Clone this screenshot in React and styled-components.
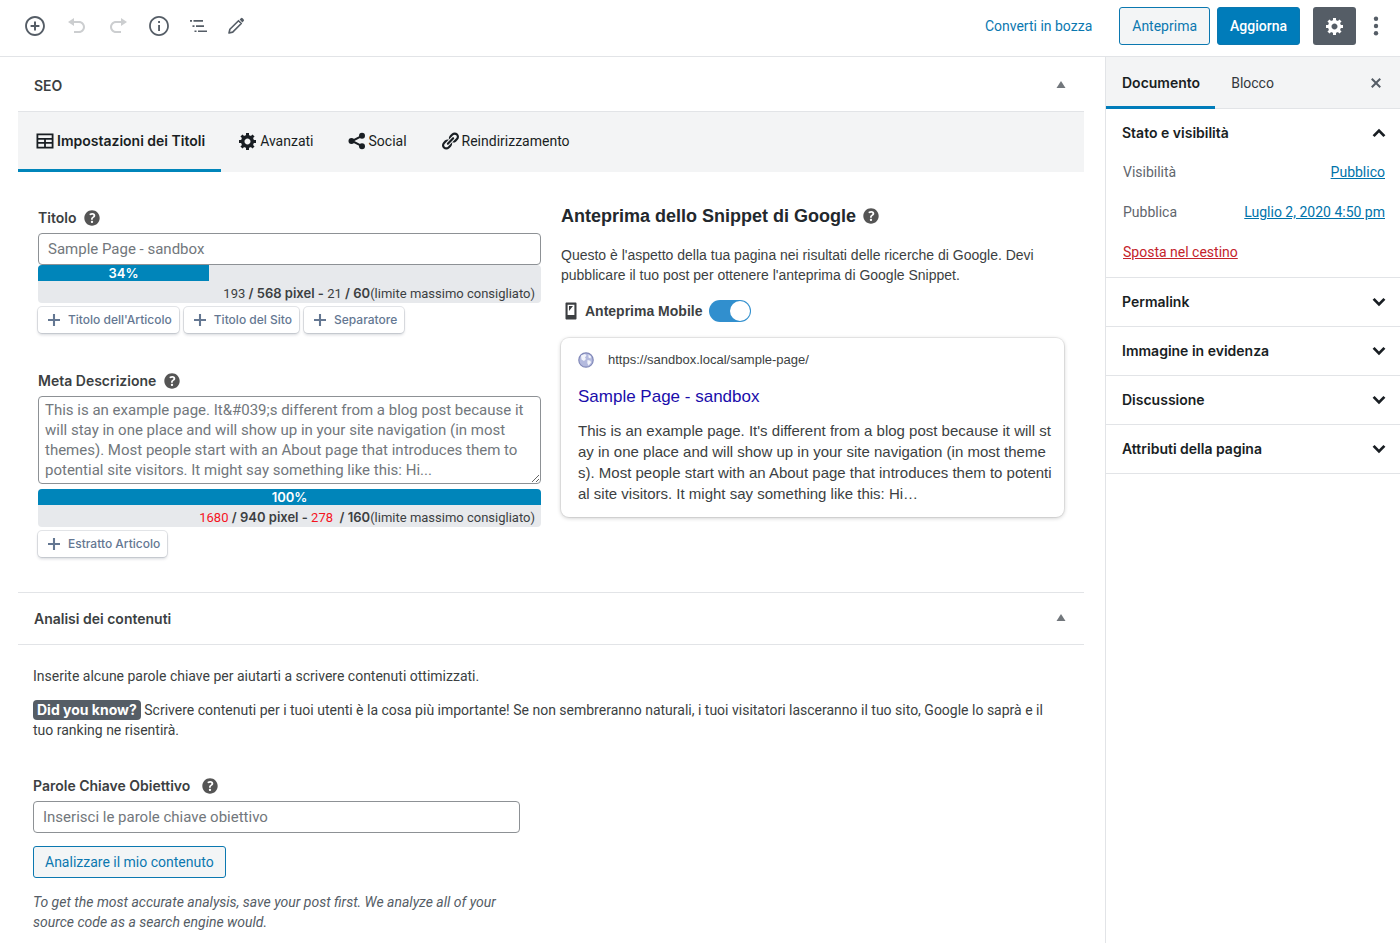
import React from "react";
import styled, { createGlobalStyle } from "styled-components";

const ui = `Roboto, "Liberation Sans", sans-serif`;
const strong = `Inter, "Liberation Sans", sans-serif`;
const arial = `"Liberation Sans", Arial, sans-serif`;

const GlobalStyle = createGlobalStyle`
  *, *::before, *::after { box-sizing: border-box; }
  body {
    margin: 0;
    background: #fff;
    color: #3c3f42;
    font-family: ${ui};
    font-size: 14px;
    line-height: 20px;
  }
  button, input, textarea { font: inherit; color: inherit; }
  button { background: none; border: 0; padding: 0; margin: 0; cursor: pointer; }
  h1, h2, h3, p { margin: 0; }
`;

/* ---------- icons ---------- */

const PATHS = {
  insert:
    "M10 1c-5 0-9 4-9 9s4 9 9 9 9-4 9-9-4-9-9-9zm0 16.300c-4 0-7.300-3.300-7.300-7.300S6 2.700 10 2.700s7.300 3.300 7.300 7.300-3.300 7.300-7.300 7.300zm.9-11.300H9.100v3.100H6v1.800h3.100V14h1.800v-3.100H14V9.100h-3.100V6z",
  undo: "M12 5H7V2L1 6l6 4V7h5c2.2 0 4 1.8 4 4s-1.8 4-4 4H7v2h5c3.3 0 6-2.7 6-6s-2.7-6-6-6z",
  redo: "M8 5h5V2l6 4-6 4V7H8c-2.2 0-4 1.8-4 4s1.8 4 4 4h5v2H8c-3.3 0-6-2.7-6-6s2.7-6 6-6z",
  info: "M10 1c-5 0-9 4-9 9s4 9 9 9 9-4 9-9-4-9-9-9zm0 16.400c-4.100 0-7.400-3.300-7.400-7.400S5.900 2.600 10 2.600s7.400 3.300 7.400 7.400-3.300 7.400-7.400 7.400zM9.200 9h1.700v5.500H9.200zM9.200 5.500h1.700v1.800H9.200z",
  gear: "M18 12h-2.180c-.17.7-.44 1.350-.81 1.930l1.540 1.540-2.100 2.100-1.540-1.540c-.58.36-1.230.63-1.910.79V19H8v-2.180c-.68-.16-1.330-.43-1.910-.79l-1.540 1.540-2.120-2.120 1.540-1.540c-.36-.58-.63-1.230-.79-1.910H1V9.030h2.170c.16-.7.44-1.350.8-1.940L2.430 5.550l2.100-2.100 1.540 1.540c.58-.37 1.240-.64 1.930-.81V2h3v2.180c.68.16 1.330.43 1.910.79l1.540-1.540 2.120 2.120-1.540 1.540c.36.59.64 1.240.8 1.940H18V12zm-8.500 1.500c1.660 0 3-1.340 3-3s-1.340-3-3-3-3 1.340-3 3 1.340 3 3 3z",
  table:
    "M18.500 17.500V2.500H1.500v15h17zM16.700 7H3.300V4.300h13.400V7zm-7.600 4H3.300V8.700h5.800V11zm7.600 0h-5.800V8.700h5.800V11zm-7.600 4.700H3.300v-2.900h5.800v2.900zm7.600 0h-5.800v-2.900h5.800v2.900z",
  help: "M17 10c0-3.870-3.140-7-7-7-3.870 0-7 3.130-7 7s3.130 7 7 7c3.860 0 7-3.130 7-7zm-6.300 1.480H9.140v-.43c0-.38.08-.7.24-.98s.46-.57.88-.89c.41-.29.68-.53.81-.71.14-.18.2-.39.2-.62 0-.25-.09-.44-.28-.58-.19-.13-.45-.19-.79-.19-.58 0-1.250.15-2 .46l-.64-1.280c.87-.49 1.800-.74 2.770-.74.81 0 1.450.2 1.920.58.48.39.71.91.71 1.550 0 .43-.09.8-.29 1.110-.19.32-.57.67-1.110 1.060-.38.28-.61.49-.71.63-.1.15-.15.34-.15.57v.46zm-1.470 2.740c-.18-.17-.27-.42-.27-.73 0-.33.08-.58.26-.75s.43-.25.77-.25c.32 0 .57.09.75.26s.27.42.27.74c0 .3-.09.55-.27.72-.18.18-.43.27-.75.27-.33 0-.58-.09-.76-.26z",
  link: "M17.740 2.760c1.680 1.690 1.680 4.410 0 6.100l-1.530 1.520c-1.120 1.120-2.700 1.470-4.140 1.090l2.620-2.610.76-.77.76-.76c.84-.84.84-2.200 0-3.040-.84-.85-2.200-.85-3.040 0l-.77.76-3.380 3.380c-.37-1.440-.02-3.020 1.100-4.140l1.520-1.530c1.690-1.680 4.420-1.680 6.100 0zM8.590 13.430l5.340-5.340c.42-.42.42-1.100 0-1.520-.44-.43-1.130-.39-1.530 0l-5.330 5.340c-.42.42-.42 1.100 0 1.520.44.43 1.130.39 1.520 0zm-.76 2.290l4.140-4.150c.38 1.440.03 3.020-1.090 4.140l-1.520 1.530c-1.690 1.680-4.410 1.680-6.100 0-1.680-1.680-1.680-4.420 0-6.100l1.530-1.520c1.120-1.120 2.700-1.470 4.140-1.100l-4.140 4.150c-.85.84-.85 2.200 0 3.050.84.84 2.200.84 3.040 0z",
  phone:
    "M5.500 1.500h9c.55 0 1 .45 1 1v15c0 .55-.45 1-1 1h-9c-.55 0-1-.45-1-1v-15c0-.55.45-1 1-1zm7.900 12.500V3.700H6.600V14h6.800zM8 5h4l-4 5V5z",
  close:
    "M14.950 6.460L11.410 10l3.540 3.540-1.410 1.410L10 11.420l-3.530 3.530-1.420-1.420L8.580 10 5.050 6.470l1.420-1.420L10 8.580l3.540-3.530z",
  plus: "M17.500 8.700v2.600h-6.200v6.200H8.700v-6.200H2.500V8.700h6.200V2.500h2.600v6.200z",
  chevronDown: "M4.500 5l5.500 5.500L15.500 5 18 7.200l-8 8-8-8z",
  chevronUp: "M15.500 15L10 9.500 4.500 15 2 12.800l8-8 8 8z",
  outline: "M2 4h2v1.700H2zM5.500 4H15v1.700H5.500zM4.500 9.200h2v1.700h-2zM8 9.200h8v1.700H8zM6.500 14.400h2v1.700h-2zM10 14.400h9v1.700h-9z",
  caret: "M10 0l9 14H1z",
};

const Svg = styled.svg`
  display: block;
  flex: none;
  fill: currentColor;
`;

function Icon({ name, size = 20 }) {
  return (
    <Svg width={size} height={size} viewBox="0 0 20 20" aria-hidden="true">
      <path d={PATHS[name]} fillRule="evenodd" />
    </Svg>
  );
}

function PencilIcon() {
  return (
    <Svg width="20" height="20" viewBox="0 0 20 20" aria-hidden="true">
      <path
        d="M3 17l.9-3.700L12.500 4.700l2.800 2.800L6.700 16.100z"
        fill="none"
        stroke="currentColor"
        strokeWidth="1.600"
        strokeLinejoin="round"
      />
      <path d="M13.600 3.600l1.300-1.300a1.200 1.200 0 0 1 1.700 0l1.100 1.100a1.200 1.200 0 0 1 0 1.700l-1.300 1.300z" />
    </Svg>
  );
}

function ShareIcon() {
  return (
    <Svg width="20" height="20" viewBox="0 0 20 20" aria-hidden="true">
      <path d="M15 4.800L5 10l10 5.200" fill="none" stroke="currentColor" strokeWidth="2" />
      <circle cx="15" cy="4.800" r="3" />
      <circle cx="4.500" cy="10" r="3" />
      <circle cx="15" cy="15.200" r="3" />
    </Svg>
  );
}

function DotsIcon() {
  return (
    <Svg width="20" height="20" viewBox="0 0 20 20" aria-hidden="true">
      <circle cx="10" cy="2.800" r="2.200" />
      <circle cx="10" cy="10" r="2.200" />
      <circle cx="10" cy="17.200" r="2.200" />
    </Svg>
  );
}

function GlobeIcon() {
  return (
    <Svg width="16" height="16" viewBox="0 0 16 16" aria-hidden="true">
      <circle cx="8" cy="8" r="7.200" fill="#b4bade" stroke="#8088b8" strokeWidth="1.200" />
      <path d="M3 3.500l4-1.500 1.500 1.500L7 5.500l1 1.500-2 2-2.500-1.500zM9.500 8l3 .8.5 2-2.500 2.700-1.200-2.500zM10.500 2.500l2.500 2-.5 2-2-1z" fill="#f2f4fb" />
    </Svg>
  );
}

/* ---------- page frame ---------- */

const Page = styled.div`
  display: flex;
  flex-direction: column;
  min-height: 100vh;
`;

const Header = styled.header`
  display: flex;
  align-items: center;
  justify-content: space-between;
  height: 57px;
  padding: 0 14px 4px 24px;
  border-bottom: 1px solid #e2e4e7;
`;

const Tools = styled.div`
  display: flex;
  align-items: center;
  gap: 20px;
`;

const ToolGroup = styled.div`
  display: flex;
  align-items: center;
  gap: ${(p) => p.$gap}px;
`;

const ToolButton = styled.button`
  color: #555d66;
  &:disabled { color: #ccced0; }
`;

const HeaderActions = styled.div`
  display: flex;
  align-items: center;
`;

const TextButton = styled.button`
  color: #0b78b0;
  margin-right: 27px;
`;

const BoxButton = styled.button`
  height: ${(p) => (p.$small ? 32 : 38)}px;
  padding: 0 ${(p) => (p.$small ? 11 : 12)}px;
  border: 1px solid #0b78b0;
  border-radius: 3px;
  background: ${(p) => (p.$primary ? "#007cba" : "#f3f5f6")};
  color: ${(p) => (p.$primary ? "#fff" : "#0b78b0")};
  font-weight: ${(p) => (p.$primary ? 500 : 400)};
  margin-right: ${(p) => (p.$primary ? 13 : 7)}px;
`;

const GearButton = styled.button`
  display: grid;
  place-items: center;
  width: 43px;
  height: 38px;
  border-radius: 3px;
  background: #555d66;
  color: #fff;
  margin-right: 10px;
`;

const Body = styled.div`
  display: flex;
  flex: 1;
`;

const Main = styled.main`
  flex: 1;
  min-width: 0;
  padding: 0 21px 0 18px;
`;

/* ---------- meta boxes ---------- */

const BoxHeader = styled.div`
  display: flex;
  align-items: center;
  justify-content: space-between;
  height: ${(p) => (p.$first ? 55 : 52)}px;
  padding: ${(p) => (p.$first ? 4 : 0)}px 18px 0 16px;
  border-bottom: 1px solid #e2e4e7;
  button { color: #72777c; }
`;

const BoxTitle = styled.h2`
  font-family: ${strong};
  font-size: 14px;
  line-height: 20px;
  font-weight: 600;
`;

const Tabs = styled.div`
  display: flex;
  height: 60px;
  background: #f3f4f5;
`;

const Tab = styled.button`
  display: flex;
  align-items: center;
  gap: 2px;
  padding: 3px 16px 3px 17px;
  color: #191e23;
  font-family: ${(p) => (p.$active ? strong : ui)};
  font-weight: ${(p) => (p.$active ? 600 : 400)};
  border-bottom: 3px solid ${(p) => (p.$active ? "#0085ba" : "transparent")};
`;

const SeoBody = styled.div`
  display: grid;
  grid-template-columns: minmax(0, 1fr) minmax(0, 1fr);
  gap: 20px;
  padding: 32px 20px 35px;
  border-bottom: 1px solid #e2e4e7;
`;

const Column = styled.div`
  display: flex;
  flex-direction: column;
  min-width: 0;
`;

const Field = styled.div`
  & + & { margin-top: 34px; }
`;

const FieldLabel = styled.div`
  display: flex;
  align-items: center;
  gap: ${(p) => (p.$wide ? 9 : 5)}px;
  height: 29px;
  padding-bottom: 1px;
  font-family: ${strong};
  font-weight: 600;
  button { color: #555; }
`;

const TextInput = styled.input`
  display: block;
  width: 100%;
  height: 32px;
  padding: 0 9px;
  border: 1px solid #8d9195;
  border-radius: 4px;
  background: #fff;
  font-size: 15px;
  &::placeholder { color: #72777c; opacity: 1; }
`;

const TextArea = styled.textarea`
  display: block;
  width: 100%;
  height: 88px;
  padding: 3px 6px;
  border: 1px solid #8d9195;
  border-radius: 4px;
  background: #fff;
  font-size: 15px;
  line-height: 20px;
  overflow: hidden;
  margin-bottom: 5px;
  &::placeholder { color: #72777c; opacity: 1; }
`;

const Meter = styled.div`
  background: #e7e9ec;
  border-radius: 4px;
  overflow: hidden;
  font-size: 13px;
`;

const MeterFill = styled.div`
  height: 16px;
  line-height: 16px;
  background: #0085ba;
  color: #fff;
  font-family: ${strong};
  font-weight: 600;
  text-align: center;
`;

const MeterText = styled.div`
  padding: 2px 6px 0;
  height: 22px;
  text-align: right;
  white-space: pre;
  b { font-family: ${strong}; font-weight: 600; }
`;

const Over = styled.span`
  color: #f5141e;
`;

const Chips = styled.div`
  display: flex;
  gap: 5px;
  margin-top: 4px;
`;

const Chip = styled.button`
  display: flex;
  align-items: center;
  gap: 6px;
  height: 26px;
  padding: 0 7px 0 8px;
  border-radius: 4px;
  background: #fff;
  box-shadow: 0 0 0 1px rgba(60, 70, 90, 0.14), 0 2px 3px rgba(60, 70, 90, 0.2);
  color: #647792;
  font-family: ${strong};
  font-size: 12px;
  font-weight: 500;
`;

/* ---------- snippet ---------- */

const SnippetTitle = styled.h3`
  display: flex;
  align-items: center;
  gap: 4px;
  height: 24px;
  font-family: ${arial};
  font-size: 18px;
  font-weight: 700;
  color: #23282d;
  button { color: #555; }
`;

const SnippetText = styled.p`
  margin-top: 17px;
  font-family: ${arial};
`;

const MobileRow = styled.label`
  display: flex;
  align-items: center;
  height: 22px;
  margin-top: 15px;
  font-family: ${arial};
  font-weight: 700;
  gap: 4px;
`;

const Switch = styled.input`
  appearance: none;
  width: 42px;
  height: 22px;
  margin: 0 0 0 3px;
  border-radius: 11px;
  background: #318fce;
  display: flex;
  justify-content: flex-end;
  padding: 1px;
  &::after {
    content: "";
    width: 20px;
    height: 20px;
    border-radius: 50%;
    background: #fff;
  }
`;

const SnippetCard = styled.div`
  margin-top: 16px;
  padding: 12px 0 13px 17px;
  border-radius: 8px;
  box-shadow: 0 0 0 1px rgba(0, 0, 0, 0.06), 0 1px 4px rgba(0, 0, 0, 0.22);
  font-family: ${arial};
`;

const SnippetUrl = styled.div`
  display: flex;
  align-items: center;
  gap: 14px;
  font-size: 13px;
`;

const SnippetHeading = styled.div`
  margin-top: 17px;
  font-size: 17px;
  color: #1a0dab;
`;

const SnippetDescription = styled.p`
  margin-top: 13px;
  font-size: 15px;
  line-height: 21px;
  word-break: break-all;
`;

/* ---------- analysis ---------- */

const Analysis = styled.div`
  padding: 21px 15px 10px;
`;

const Tip = styled.p`
  margin-top: 14px;
  padding-right: 8px;
`;

const Badge = styled.span`
  display: inline-block;
  padding: 0 4px;
  border-radius: 4px;
  background: #555d66;
  color: #fff;
  font-family: ${strong};
  font-weight: 700;
`;

const Keywords = styled.div`
  width: 47%;
  margin-top: 32px;
`;

const AnalyzeButton = styled(BoxButton)`
  margin-top: 13px;
`;

const Note = styled.p`
  margin-top: 14px;
  font-style: italic;
  color: #555d66;
`;

/* ---------- sidebar ---------- */

const Sidebar = styled.aside`
  width: 295px;
  flex: none;
  border-left: 1px solid #e2e4e7;
`;

const SideTabs = styled.div`
  display: flex;
  align-items: stretch;
  height: 52px;
  background: #f3f4f5;
  border-bottom: 1px solid #e2e4e7;
  padding-right: 14px;
`;

const SideTab = styled.button`
  padding: 3px 15px 0 16px;
  margin-bottom: -1px;
  color: ${(p) => (p.$active ? "#191e23" : "#33383d")};
  font-family: ${(p) => (p.$active ? strong : ui)};
  font-weight: ${(p) => (p.$active ? 600 : 400)};
  border-bottom: 3px solid ${(p) => (p.$active ? "#007cba" : "transparent")};
`;

const CloseButton = styled.button`
  margin-left: auto;
  color: #555d66;
`;

const Section = styled.section`
  border-bottom: 1px solid #e2e4e7;
`;

const SectionToggle = styled.button`
  display: flex;
  align-items: center;
  justify-content: space-between;
  width: 100%;
  height: 48px;
  padding: 0 13px 0 16px;
  font-family: ${strong};
  font-weight: 600;
  color: #191e23;
`;

const StatusRows = styled.div`
  display: flex;
  flex-direction: column;
  gap: 20px;
  padding: 5px 15px 15px 17px;
  color: #5f666d;
`;

const StatusRow = styled.div`
  display: flex;
  justify-content: space-between;
`;

const LinkButton = styled.button`
  color: ${(p) => (p.$danger ? "#c4232b" : "#0073aa")};
  text-decoration: underline;
`;

function Help() {
  return (
    <button type="button" aria-label="Aiuto">
      <Icon name="help" size={22} />
    </button>
  );
}

const CLOSED = ["Permalink", "Immagine in evidenza", "Discussione", "Attributi della pagina"];

export default function App() {
  return (
    <Page>
      <GlobalStyle />
      <Header>
        <Tools>
          <ToolGroup $gap={21}>
            <ToolButton aria-label="Aggiungi blocco"><Icon name="insert" size={22} /></ToolButton>
            <ToolButton aria-label="Annulla" disabled><Icon name="undo" /></ToolButton>
            <ToolButton aria-label="Ripeti" disabled><Icon name="redo" /></ToolButton>
          </ToolGroup>
          <ToolGroup $gap={18}>
            <ToolButton aria-label="Informazioni"><Icon name="info" size={22} /></ToolButton>
            <ToolButton aria-label="Navigazione blocchi"><Icon name="outline" /></ToolButton>
            <ToolButton aria-label="Strumenti"><PencilIcon /></ToolButton>
          </ToolGroup>
        </Tools>
        <HeaderActions>
          <TextButton>Converti in bozza</TextButton>
          <BoxButton>Anteprima</BoxButton>
          <BoxButton $primary>Aggiorna</BoxButton>
          <GearButton aria-label="Impostazioni"><Icon name="gear" /></GearButton>
          <ToolButton aria-label="Altro"><DotsIcon /></ToolButton>
        </HeaderActions>
      </Header>

      <Body>
        <Main>
          <BoxHeader $first>
            <BoxTitle>SEO</BoxTitle>
            <button aria-label="Chiudi SEO"><Icon name="caret" size={10} /></button>
          </BoxHeader>
          <Tabs>
            <Tab $active><Icon name="table" />Impostazioni dei Titoli</Tab>
            <Tab><Icon name="gear" />Avanzati</Tab>
            <Tab><ShareIcon />Social</Tab>
            <Tab><Icon name="link" />Reindirizzamento</Tab>
          </Tabs>

          <SeoBody>
            <Column>
              <Field>
                <FieldLabel><label htmlFor="titolo">Titolo</label><Help /></FieldLabel>
                <TextInput id="titolo" placeholder="Sample Page - sandbox" />
                <Meter>
                  <MeterFill style={{ width: "34%" }}>34%</MeterFill>
                  <MeterText>
                    193<b> / 568 pixel - </b>21<b> / 60</b>(limite massimo consigliato)
                  </MeterText>
                </Meter>
                <Chips>
                  <Chip><Icon name="plus" size={16} />Titolo dell'Articolo</Chip>
                  <Chip><Icon name="plus" size={16} />Titolo del Sito</Chip>
                  <Chip><Icon name="plus" size={16} />Separatore</Chip>
                </Chips>
              </Field>
              <Field>
                <FieldLabel><label htmlFor="meta">Meta Descrizione</label><Help /></FieldLabel>
                <TextArea
                  id="meta"
                  placeholder={
                    "This is an example page. It&#039;s different from a blog post because it will stay in one place and will show up in your site navigation (in most themes). Most people start with an About page that introduces them to potential site visitors. It might say something like this: Hi..."
                  }
                />
                <Meter>
                  <MeterFill style={{ width: "100%" }}>100%</MeterFill>
                  <MeterText>
                    <Over>1680</Over><b> / 940 pixel - </b><Over>278</Over><b>  / 160</b>(limite massimo consigliato)
                  </MeterText>
                </Meter>
                <Chips>
                  <Chip><Icon name="plus" size={16} />Estratto Articolo</Chip>
                </Chips>
              </Field>
            </Column>

            <Column>
              <SnippetTitle>Anteprima dello Snippet di Google<Help /></SnippetTitle>
              <SnippetText>
                Questo è l'aspetto della tua pagina nei risultati delle ricerche di Google. Devi
                pubblicare il tuo post per ottenere l'anteprima di Google Snippet.
              </SnippetText>
              <MobileRow>
                <Icon name="phone" />
                Anteprima Mobile
                <Switch type="checkbox" defaultChecked />
              </MobileRow>
              <SnippetCard>
                <SnippetUrl><GlobeIcon />https://sandbox.local/sample-page/</SnippetUrl>
                <SnippetHeading>Sample Page - sandbox</SnippetHeading>
                <SnippetDescription>
                  This is an example page. It's different from a blog post because it will st
                  <br />
                  ay in one place and will show up in your site navigation (in most theme
                  <br />
                  s). Most people start with an About page that introduces them to potenti
                  <br />
                  al site visitors. It might say something like this: Hi…
                </SnippetDescription>
              </SnippetCard>
            </Column>
          </SeoBody>

          <BoxHeader>
            <BoxTitle>Analisi dei contenuti</BoxTitle>
            <button aria-label="Chiudi analisi"><Icon name="caret" size={10} /></button>
          </BoxHeader>
          <Analysis>
            <p>Inserite alcune parole chiave per aiutarti a scrivere contenuti ottimizzati.</p>
            <Tip>
              <Badge>Did you know?</Badge> Scrivere contenuti per i tuoi utenti è la cosa più
              importante! Se non sembreranno naturali, i tuoi visitatori lasceranno il tuo sito,
              Google lo saprà e il tuo ranking ne risentirà.
            </Tip>
            <Keywords>
              <FieldLabel $wide><label htmlFor="parole">Parole Chiave Obiettivo</label><Help /></FieldLabel>
              <TextInput id="parole" placeholder="Inserisci le parole chiave obiettivo" />
              <AnalyzeButton $small>Analizzare il mio contenuto</AnalyzeButton>
              <Note>
                To get the most accurate analysis, save your post first. We analyze all of your
                source code as a search engine would.
              </Note>
            </Keywords>
          </Analysis>
        </Main>

        <Sidebar>
          <SideTabs>
            <SideTab $active>Documento</SideTab>
            <SideTab>Blocco</SideTab>
            <CloseButton aria-label="Chiudi impostazioni"><Icon name="close" /></CloseButton>
          </SideTabs>
          <Section>
            <SectionToggle>Stato e visibilità<Icon name="chevronUp" size={16} /></SectionToggle>
            <StatusRows>
              <StatusRow><span>Visibilità</span><LinkButton>Pubblico</LinkButton></StatusRow>
              <StatusRow><span>Pubblica</span><LinkButton>Luglio 2, 2020 4:50 pm</LinkButton></StatusRow>
              <StatusRow><LinkButton $danger>Sposta nel cestino</LinkButton></StatusRow>
            </StatusRows>
          </Section>
          {CLOSED.map((title) => (
            <Section key={title}>
              <SectionToggle>{title}<Icon name="chevronDown" size={16} /></SectionToggle>
            </Section>
          ))}
        </Sidebar>
      </Body>
    </Page>
  );
}
